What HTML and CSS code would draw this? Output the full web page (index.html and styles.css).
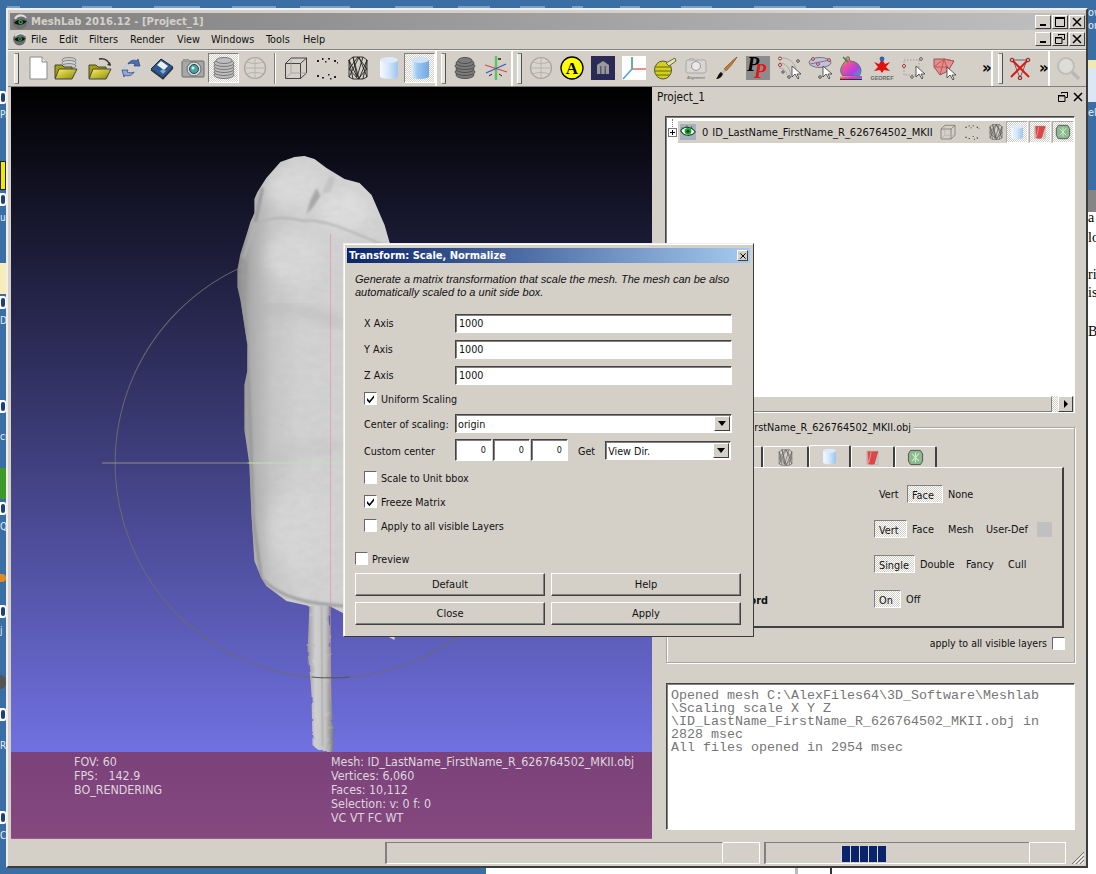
FILE: index.html
```html
<!DOCTYPE html>
<html lang="en">
<head>
<meta charset="utf-8">
<title>MeshLab 2016.12 - [Project_1]</title>
<link rel="stylesheet" href="styles.css">
</head>
<body>
<svg class="defs" width="0" height="0" aria-hidden="true">
  <defs>
    <linearGradient id="fold" x1="0" y1="0" x2="1" y2="1"><stop offset="0" stop-color="#fff36a"/><stop offset="1" stop-color="#8a8a00"/></linearGradient>
    <linearGradient id="cyl" x1="0" y1="0" x2="1" y2="0"><stop offset="0" stop-color="#f4f9ff"/><stop offset=".45" stop-color="#d8e8fa"/><stop offset="1" stop-color="#9cc4ee"/></linearGradient>
    <linearGradient id="cyl2" x1="0" y1="0" x2="1" y2="0"><stop offset="0" stop-color="#e8f2fc"/><stop offset=".35" stop-color="#9cc6f0"/><stop offset="1" stop-color="#6fa8e4"/></linearGradient>
    <linearGradient id="rainbow" x1="0" y1="0" x2="1" y2="1"><stop offset="0" stop-color="#f6d72c"/><stop offset=".35" stop-color="#f0509a"/><stop offset=".7" stop-color="#b040e0"/><stop offset="1" stop-color="#30b0e0"/></linearGradient>
    <symbol id="i-new" viewBox="0 0 24 24"><path d="M4 1h12l5 5v17H4z" fill="#fff" stroke="#8a8a8a"/><path d="M16 1v5h5" fill="#e8e8e8" stroke="#8a8a8a"/></symbol>
    <symbol id="i-open" viewBox="0 0 24 24"><g stroke="#777" stroke-width=".8"><ellipse cx="15" cy="4" rx="7" ry="2.500" fill="#c8c8c8"/><ellipse cx="15" cy="7" rx="7" ry="2.500" fill="#d4d4d4"/><ellipse cx="15" cy="10" rx="7" ry="2.500" fill="#c8c8c8"/></g><path d="M1 9h7l2 2h8v11H1z" fill="#a6a000" stroke="#444"/><path d="M1 23 5 13h18l-5 10z" fill="url(#fold)" stroke="#444"/></symbol>
    <symbol id="i-openp" viewBox="0 0 24 24"><path d="M11 3c5-1 9 1 11 6" fill="none" stroke="#333" stroke-width="1.300"/><path d="M23 10l-4-1 3-3z" fill="#333"/><path d="M1 9h7l2 2h8v11H1z" fill="#a6a000" stroke="#444"/><path d="M1 23 5 13h18l-5 10z" fill="url(#fold)" stroke="#444"/></symbol>
    <symbol id="i-reload" viewBox="0 0 24 24"><path d="M9 8c1-3 6-5 9-3l1-2 2 7-6 0 1-2c-2-1-5-1-7 0z" fill="#4a6fb5" stroke="#25407a" stroke-width=".7"/><path d="M15 16c-1 3-6 5-9 3l-1 2-2-7 6 0-1 2c2 1 5 1 7 0z" fill="#8faad6" stroke="#25407a" stroke-width=".7"/><path d="M5 12 8 8M19 12l-3 4" stroke="#b9cdea" stroke-width="2"/></symbol>
    <symbol id="i-floppy" viewBox="0 0 24 24"><path d="M11 3 23 11 13 22 1 13z" fill="#2a5a9a" stroke="#222"/><path d="M11 5l7 5-4 4-7-5z" fill="#eef2f8"/><path d="M10 15l3-2 3 2-3 3z" fill="#8ab"/><path d="M1 14 13 23l10-11" fill="none" stroke="#333" stroke-width="1.200"/></symbol>
    <symbol id="i-camera" viewBox="0 0 24 24"><rect x="1" y="5" width="22" height="16" rx="1" fill="#a8a8a8" stroke="#6a6a6a"/><rect x="2" y="3" width="6" height="3" fill="#999"/><circle cx="13" cy="13" r="7" fill="#dcdcdc" stroke="#666"/><circle cx="13" cy="13" r="4.500" fill="#4fa0a0" stroke="#244"/><circle cx="12" cy="12" r="1.500" fill="#bff"/></symbol>
    <symbol id="i-layers" viewBox="0 0 24 24"><g fill="#bdbdbd" stroke="#6e6e6e" stroke-width=".9"><ellipse cx="12" cy="19" rx="10" ry="3.500"/><ellipse cx="12" cy="16" rx="10" ry="3.500"/><ellipse cx="12" cy="13" rx="10" ry="3.500"/><ellipse cx="12" cy="10" rx="10" ry="3.500"/><ellipse cx="12" cy="7" rx="10" ry="3.500"/><ellipse cx="12" cy="4.500" rx="8" ry="3"/></g></symbol>
    <symbol id="i-layers2" viewBox="0 0 24 24"><g fill="#7c7c7c" stroke="#4a4a4a" stroke-width=".9"><ellipse cx="12" cy="19" rx="9" ry="3.500"/><ellipse cx="12" cy="16" rx="10" ry="3.500"/><ellipse cx="12" cy="13" rx="9" ry="3.500"/><ellipse cx="12" cy="10" rx="10" ry="3.500"/><ellipse cx="12" cy="7" rx="9" ry="3.500"/><ellipse cx="12" cy="4.500" rx="7" ry="3"/></g></symbol>
    <symbol id="i-globe" viewBox="0 0 24 24"><circle cx="12" cy="12" r="10.500" fill="#d8d4cc" stroke="#a4a4a0" stroke-width="1.200"/><path d="M1.500 12h21M12 1.500v21M4 6c5 2 11 2 16 0M4 18c5-2 11-2 16 0" fill="none" stroke="#b4b4b0"/></symbol>
    <symbol id="i-box" viewBox="0 0 24 24"><path d="M1.500 7.500h15v15h-15zM1.500 7.500 7 2h15.500v15L16.500 22.500M16.500 7.500 22.500 2" fill="none" stroke="#444" stroke-width="1"/><path d="M1.500 22.500 7 17h15.500M7 2v15" fill="none" stroke="#999" stroke-width=".7"/></symbol>
    <symbol id="i-points" viewBox="0 0 24 24"><g fill="#222"><rect x="2" y="4" width="2" height="2"/><rect x="7" y="2" width="1.500" height="2"/><rect x="13" y="2" width="2" height="1.500"/><rect x="19" y="4" width="2" height="2"/><rect x="10" y="5" width="1.500" height="1.500"/><rect x="2" y="19" width="2" height="2"/><rect x="7" y="21" width="2" height="1.500"/><rect x="13" y="18" width="1.500" height="1.500"/><rect x="19" y="20" width="2" height="2"/><rect x="15" y="22" width="1.500" height="1.500"/><rect x="22" y="6" width="1" height="1.500"/></g></symbol>
    <symbol id="i-wire" viewBox="0 0 24 24"><path d="M3 4 7 1h10l4 3v17l-4 2H7l-4-2zM3 4l8 17 6-20M7 1l4 20M21 4l-8 19L7 1M3 21 13 1l8 20M7 23 3 4m14 19 4-19M3 13l9-12 9 12-9 10z" fill="none" stroke="#222" stroke-width=".9"/></symbol>
    <symbol id="i-smooth" viewBox="0 0 24 24"><path d="M3 4v16c0 4 18 4 18 0V4z" fill="url(#cyl)"/><ellipse cx="12" cy="4" rx="9" ry="3" fill="#dceafa"/></symbol>
    <symbol id="i-flat" viewBox="0 0 24 24"><path d="M3 4v16c0 4 18 4 18 0V4z" fill="url(#cyl2)"/><ellipse cx="12" cy="4" rx="9" ry="3" fill="#cfe2f7"/></symbol>
    <symbol id="i-red" viewBox="0 0 24 24"><path d="M5 3h15v2l-5 16c-3 2-9 1-10-1z" fill="#d84848"/><path d="M4 4v16h3z" fill="#e9a0a0"/><path d="M20 5v15l-4 2z" fill="#c8c8c8"/><path d="M10 4 7 19" stroke="#f3b0b0"/><path d="M4 3h16v19H4z" fill="none" stroke="#999" stroke-width=".5"/></symbol>
    <symbol id="i-tex" viewBox="0 0 24 24"><path d="M5 2h14l3 5v10l-3 5H5l-3-5V7z" fill="#8fb88f" stroke="#555" stroke-width="1.400"/><path d="M7 7l5 5 5-6M7 17l5-5 5 5M12 5v14" stroke="#c9f0c9" stroke-width="1.500" fill="none"/></symbol>
    <symbol id="i-axis" viewBox="0 0 24 24"><path d="M12 0v24" stroke="#5cc45c" stroke-width="2.400"/><path d="M1 9l22 7" stroke="#d84a4a" stroke-width="1.300"/><path d="M2 17 22 8" stroke="#3a58c8" stroke-width="1.300"/><path d="M5 20l3-2M18 20l-3-2" stroke="#222"/><path d="M14 3h3" stroke="#222" stroke-width="1.500"/></symbol>
    <symbol id="i-dark" viewBox="0 0 24 24"><rect width="24" height="24" fill="#2a2a55"/><path d="M6 18V9l6-4 6 4v9z" fill="#9a9a9a"/><path d="M9 10h1.500v8H9zm4.500 0H15v8h-1.500z" fill="#55557a"/></symbol>
    <symbol id="i-xyz" viewBox="0 0 24 24"><rect width="24" height="24" fill="#fff"/><path d="M10 13V1" stroke="#2e9a6a" stroke-width="1.500"/><path d="M10 13h14" stroke="#e06a6a" stroke-width="1.500"/><path d="M10 13 1 23" stroke="#4aa0e0" stroke-width="1.500"/></symbol>
    <symbol id="i-tape" viewBox="0 0 24 24"><ellipse cx="10" cy="14" rx="8.500" ry="9" fill="#d2cf1c" stroke="#554" stroke-width="1"/><path d="M2 11h16M2 15h16M3 19h14" stroke="#6b6a10"/><path d="M13 7 22 2l1 3-7 5z" fill="#e8e49a" stroke="#665"/></symbol>
    <symbol id="i-camg" viewBox="0 0 24 24"><rect x="2" y="4" width="20" height="13" rx="2" fill="#d8d6d0" stroke="#a8a8a8"/><circle cx="12" cy="10" r="4.500" fill="#e8e8e8" stroke="#9a9a9a"/><rect x="5" y="2" width="5" height="2" fill="#b8b8b8"/></symbol>
    <symbol id="i-brush" viewBox="0 0 24 24"><path d="M22 1c-3 5-7 10-11 14l-2-2C13 9 18 4 22 1z" fill="#c87a30" stroke="#6b3e14" stroke-width=".6"/><path d="M9 13l2 2-3 3-2-2z" fill="#bbb"/><path d="M6 16l2 2c-1 3-4 5-7 5 2-2 2-5 5-7z" fill="#111"/></symbol>
    <symbol id="i-sel1" viewBox="0 0 24 24"><g fill="none" stroke="#a8a8a8"><path d="M5 2c8 0 13 5 14 12M2 7c7 0 10 4 12 12M2 12c4 0 7 2 8 7"/></g><g fill="#eee" stroke="#a03030"><circle cx="3" cy="2.500" r="1.500"/><circle cx="3" cy="9" r="1.500"/></g><g fill="#eee" stroke="#444"><circle cx="21" cy="5" r="1.300"/><circle cx="12" cy="21" r="1.300"/><circle cx="6" cy="16" r="1.200"/></g><path d="M15 10v11l3-3 3 5 1-1-2-4h4z" fill="#fff" stroke="#333" stroke-width=".8"/></symbol>
    <symbol id="i-sel2" viewBox="0 0 24 24"><ellipse cx="12" cy="6.500" rx="11" ry="5" fill="#c0c0e0" stroke="#777"/><path d="M2 8 22 4" stroke="#777"/><g fill="#eee" stroke="#a03030"><circle cx="5" cy="3" r="1.400"/><circle cx="10" cy="8" r="1.400"/><circle cx="21" cy="4" r="1.400"/></g><circle cx="12" cy="21" r="1.300" fill="#eee" stroke="#444"/><path d="M15 10v11l3-3 3 5 1-1-2-4h4z" fill="#fff" stroke="#333" stroke-width=".8"/></symbol>
    <symbol id="i-bunny" viewBox="0 0 24 24"><path d="M7 4c-1-2 1-4 3-3 1 1 0 3 1 4 5 0 10 3 11 9 0 3-1 5-2 6H4c-2-2-3-5-2-8 1-3 3-5 5-8z" fill="url(#rainbow)" stroke="#375" stroke-width=".8"/><path d="M4 1l5 5" stroke="#384" stroke-width="1.500"/><rect x="1" y="20" width="22" height="3" fill="url(#rainbow)"/><path d="M1 23.500h22" stroke="#333"/></symbol>
    <symbol id="i-sel3" viewBox="0 0 24 24"><path d="M3 4h15v15H3z" fill="none" stroke="#999" stroke-dasharray="1.500 1.500"/><g fill="#eee" stroke="#a03030"><circle cx="3" cy="10" r="1.500"/></g><g fill="#eee" stroke="#555"><circle cx="20" cy="3" r="1.400"/><circle cx="11" cy="21" r="1.300"/></g><path d="M15 10v11l3-3 3 5 1-1-2-4h4z" fill="#fff" stroke="#333" stroke-width=".8"/></symbol>
    <symbol id="i-sel4" viewBox="0 0 24 24"><path d="M2 3h10l10 2-6 10-8 4-6-8z" fill="#e88c8c" stroke="#8a5a5a"/><path d="M2 11 12 3l4 12M8 19l4-16M2 11h14M22 5 12 3" stroke="#b65a5a" fill="none"/><path d="M15 11v11l3-3 3 5 1-1-2-4h4z" fill="#fff" stroke="#333" stroke-width=".8"/></symbol>
    <symbol id="i-xred" viewBox="0 0 24 24"><path d="M5 4h14M5 4 12 22l7-18" stroke="#666" fill="none"/><path d="M3 3 21 21M21 3 3 21" stroke="#e01818" stroke-width="2"/><g fill="#e49a9a" stroke="#822"><circle cx="4" cy="4" r="1.800"/><circle cx="20" cy="4" r="1.800"/><circle cx="12" cy="22" r="1.800"/></g></symbol>
    <symbol id="i-search" viewBox="0 0 24 24"><circle cx="10" cy="10" r="8" fill="#dedcd6" stroke="#bcbcb8" stroke-width="2"/><path d="M16 16l7 7" stroke="#b8b8b4" stroke-width="3.400"/></symbol>
    <symbol id="i-eye" viewBox="0 0 24 24"><path d="M1 10c5-7 15-7 22 2-6 7-17 7-22-2z" fill="#fff" stroke="#0a4a10" stroke-width="1.600"/><circle cx="12" cy="11" r="5" fill="#17a030"/><circle cx="12" cy="11" r="2" fill="#032"/><path d="M3 5 6 8M10 2l1 4M18 3l-2 4" stroke="#0a4a10"/></symbol>
    <symbol id="i-logo" viewBox="0 0 24 24"><circle cx="12" cy="12" r="11" fill="#6d6d6d"/><path d="M22 5A11 11 0 0 0 3 7l3 1a9 8 0 0 1 15-1z" fill="#ddd"/><path d="M3 13c4-5 12-6 19-2-4 6-13 7-19 2z" fill="#111"/><circle cx="13" cy="12" r="3.500" fill="#1fa64a"/><circle cx="13" cy="12" r="1.500" fill="#021"/></symbol>
    <symbol id="i-min" viewBox="0 0 12 12"><rect x="3" y="8" width="6" height="2" fill="#000"/></symbol>
    <symbol id="i-max" viewBox="0 0 12 12"><path d="M1.500 1.500h9v9h-9z" fill="none" stroke="#000"/><path d="M1 2h10" stroke="#000" stroke-width="2"/></symbol>
    <symbol id="i-restore" viewBox="0 0 12 12"><path d="M4.500 2.500V1.500h6v5h-2M1.500 5h6.500v5.500H1.500z" fill="none" stroke="#000"/><path d="M1 4.500h7M4 1.500h7" stroke="#000"/></symbol>
    <symbol id="i-close" viewBox="0 0 12 12"><path d="M2 2l8 8M10 2l-8 8" stroke="#000" stroke-width="1.500"/></symbol>
    <symbol id="i-check" viewBox="0 0 11 11"><path d="M2 5l2.500 2.800L9 2.200v2.600L4.500 10.200 2 7.500z" fill="#000"/></symbol>
    <symbol id="i-grip" viewBox="0 0 14 14"><path d="M13 1 1 13M13 5 5 13M13 9l-4 4" stroke="#777"/><path d="M13 3 3 13M13 7l-6 6M13 11l-2 2" stroke="#fff"/></symbol>
  </defs>
</svg>

<div class="desktop">
  <div class="top-strip"></div>
  <div class="dicon dicon-1"></div><span class="dtxt dtxt-1">Pa</span>
  <div class="dblock dblock-yellow"></div>
  <div class="dicon dicon-2"></div><span class="dtxt dtxt-2">uc</span>
  <div class="dblock dblock-pale"></div>
  <div class="dicon dicon-3"></div><span class="dtxt dtxt-3">D</span>
  <div class="dicon dicon-4"></div><span class="dtxt dtxt-4">cr</span>
  <div class="dblock dblock-green"></div>
  <div class="dicon dicon-5"></div><span class="dtxt dtxt-5">Qt</span>
  <div class="dblock dblock-orange"></div>
  <div class="dicon dicon-6"></div><span class="dtxt dtxt-6">j</span>
  <div class="dblock dblock-dark"></div>
  <div class="dicon dicon-7"></div><span class="dtxt dtxt-7">R</span>
  <div class="dicon dicon-8"></div><span class="dtxt dtxt-8">Cr</span>
  <div class="side-blob"></div>
  <span class="rtxt rtxt-1">ow</span><span class="rtxt rtxt-2">or</span><span class="rtxt rtxt-3">elo</span>
  <div class="back-window">
    <div class="back-title"></div>
    <span class="btxt btxt-1">a</span><span class="btxt btxt-2">lo</span><span class="btxt btxt-3">ri</span><span class="btxt btxt-4">is</span><span class="btxt btxt-5">B</span>
  </div>
  <div class="bottom-white"><i class="bw-a"></i><i class="bw-b"></i></div>
</div>

<div class="window">
  <div class="titlebar">
    <svg class="ti-logo"><use href="#i-logo"/></svg>
    <span class="ti-text">MeshLab 2016.12 - [Project_1]</span>
    <div class="ctrls">
      <button class="ctrl"><svg><use href="#i-min"/></svg></button>
      <button class="ctrl"><svg><use href="#i-max"/></svg></button>
      <button class="ctrl ctrl-x"><svg><use href="#i-close"/></svg></button>
    </div>
  </div>
  <div class="menubar">
    <svg class="m-logo"><use href="#i-logo"/></svg>
    <div class="menus">
      <span>File</span><span>Edit</span><span>Filters</span><span>Render</span><span>View</span><span>Windows</span><span>Tools</span><span>Help</span>
    </div>
    <div class="ctrls">
      <button class="ctrl"><svg><use href="#i-min"/></svg></button>
      <button class="ctrl"><svg><use href="#i-restore"/></svg></button>
      <button class="ctrl ctrl-x"><svg><use href="#i-close"/></svg></button>
    </div>
  </div>
  <div class="toolbar">
    <div class="tg tg-1">
      <i class="handle"></i>
      <div class="tool"><svg><use href="#i-new"/></svg></div>
      <div class="tool"><svg class="shift-l"><use href="#i-open"/></svg></div>
      <div class="tool"><svg><use href="#i-openp"/></svg></div>
      <div class="tool"><svg><use href="#i-reload"/></svg></div>
      <div class="tool"><svg><use href="#i-floppy"/></svg></div>
      <div class="tool"><svg><use href="#i-camera"/></svg></div>
      <div class="tool on"><svg><use href="#i-layers"/></svg></div>
      <div class="tool"><svg><use href="#i-globe"/></svg></div>
      <i class="vsep"></i>
      <div class="tool"><svg><use href="#i-box"/></svg></div>
      <div class="tool"><svg><use href="#i-points"/></svg></div>
      <div class="tool"><svg><use href="#i-wire"/></svg></div>
      <div class="tool"><svg><use href="#i-smooth"/></svg></div>
      <div class="tool on"><svg><use href="#i-flat"/></svg></div>
    </div>
    <div class="tg tg-2">
      <i class="handle"></i>
      <div class="tool"><svg><use href="#i-layers2"/></svg></div>
      <div class="tool"><svg><use href="#i-axis"/></svg></div>
    </div>
    <div class="tg tg-3">
      <i class="handle"></i>
      <div class="tool"><svg><use href="#i-globe"/></svg></div>
      <div class="tool"><svg viewBox="0 0 24 24"><circle cx="12" cy="12" r="11" fill="#ffff00" stroke="#000" stroke-width="1.300"/><text x="12" y="18" class="svg-a">A</text></svg></div>
      <div class="tool"><svg><use href="#i-dark"/></svg></div>
      <div class="tool"><svg><use href="#i-xyz"/></svg></div>
      <div class="tool"><svg><use href="#i-tape"/></svg></div>
      <div class="tool"><svg viewBox="0 0 24 24"><use href="#i-camg" width="24" height="24"/><text x="12" y="23" class="svg-tiny">Alignment</text></svg></div>
      <div class="tool"><svg><use href="#i-brush"/></svg></div>
      <div class="tool"><svg viewBox="0 0 24 24"><rect width="24" height="24" fill="#8c8c8c"/><text x="1" y="15" class="svg-p1">P</text><text x="8" y="22" class="svg-p2">P</text></svg></div>
      <div class="tool"><svg><use href="#i-sel1"/></svg></div>
      <div class="tool"><svg><use href="#i-sel2"/></svg></div>
      <div class="tool"><svg><use href="#i-bunny"/></svg></div>
      <div class="tool"><svg viewBox="0 0 24 24"><path d="M4 6l5 2 3-5 3 5 5-2-4 5 4 4-6-1-2 3-2-3-6 1 4-4z" fill="#e01010"/><circle cx="12" cy="3" r="2.400" fill="#3060b0"/><text x="12" y="23.500" class="svg-geo">GEOREF</text></svg></div>
      <div class="tool"><svg><use href="#i-sel3"/></svg></div>
      <div class="tool"><svg><use href="#i-sel4"/></svg></div>
      <span class="more more-3">»</span>
    </div>
    <div class="tg tg-4">
      <i class="handle"></i>
      <div class="tool"><svg><use href="#i-xred"/></svg></div>
      <span class="more more-4">»</span>
    </div>
    <div class="tg tg-5">
      <div class="tool"><svg><use href="#i-search"/></svg></div>
    </div>
  </div>

  <div class="workspace">
    <div class="gl">
      <svg class="scene" viewBox="12 87 640 665" preserveAspectRatio="none">
        <defs>
          <linearGradient id="body" gradientUnits="userSpaceOnUse" x1="238" y1="0" x2="300" y2="0"><stop offset="0" stop-color="#8a8a8a"/><stop offset=".22" stop-color="#acacac"/><stop offset=".55" stop-color="#c6c6c6"/><stop offset="1" stop-color="#d2d2d2"/></linearGradient>
          <linearGradient id="stem" gradientUnits="userSpaceOnUse" x1="308" y1="0" x2="334" y2="0"><stop offset="0" stop-color="#9c9c9c"/><stop offset=".3" stop-color="#cfcfcf"/><stop offset=".7" stop-color="#c2c2c2"/><stop offset="1" stop-color="#7c7c7c"/></linearGradient>
          <filter id="soft" x="-30%" y="-30%" width="160%" height="160%"><feGaussianBlur stdDeviation="7"/></filter>
          <filter id="soft2" x="-30%" y="-30%" width="160%" height="160%"><feGaussianBlur stdDeviation="1"/></filter>
          <filter id="noise" x="0" y="0" width="100%" height="100%"><feTurbulence type="fractalNoise" baseFrequency=".09 .16" numOctaves="2" seed="4"/><feColorMatrix values="0 0 0 0 .45  0 0 0 0 .45  0 0 0 0 .45  1.600 0 0 0 -.55"/></filter>
          <filter id="rough" x="-5%" y="-5%" width="110%" height="110%"><feTurbulence type="fractalNoise" baseFrequency=".12" numOctaves="2" seed="7" result="n"/><feDisplacementMap in="SourceGraphic" in2="n" scale="3"/></filter>
          <clipPath id="bodyclip"><path d="M295 157 305 156 315 159 327 168 345 179 360 183 372 195 385 225 395 260V640L330 606H310L287 601 267 586 262 578 255 561 252 514 250 464 245 430 245 396 245 385 248 371 248 345 245 325 241 300 238 287 238 270 241 254 248 232 251 222 255 213 255 199 258 192 267 178 281 162z"/></clipPath>
        </defs>
        <circle cx="331" cy="463" r="215" fill="none" stroke="#6a6a72" stroke-width="1"/>
        <path d="M308 653 311 680 312 695 313 745 320 751H333L334 745 332 695 331 650 330 604H310L309 630z" fill="url(#stem)" filter="url(#rough)"/>
        <path d="M322 606l1 140" stroke="#b0b0b0" stroke-width="2" opacity=".7"/>
        <path d="M295 157 305 156 315 159 327 168 345 179 360 183 372 195 385 225 395 260V640L330 606H310L287 601 267 586 262 578 255 561 252 514 250 464 245 430 245 396 245 385 248 371 248 345 245 325 241 300 238 287 238 270 241 254 248 232 251 222 255 213 255 199 258 192 267 178 281 162z" fill="url(#body)"/>
        <g clip-path="url(#bodyclip)">
          <ellipse cx="295" cy="188" rx="28" ry="20" fill="#dadada" filter="url(#soft)"/>
          <ellipse cx="345" cy="210" rx="25" ry="20" fill="#dedede" filter="url(#soft)"/>
          <ellipse cx="295" cy="258" rx="28" ry="26" fill="#d8d8d8" filter="url(#soft)"/>
          <ellipse cx="300" cy="530" rx="30" ry="42" fill="#d6d6d6" filter="url(#soft)"/>
          <path d="M250 312C275 305 300 308 345 325" stroke="#b0b0b0" stroke-width="5" fill="none" filter="url(#soft)"/>
          <path d="M250 470C280 455 300 445 345 445" stroke="#bcbcbc" stroke-width="5" fill="none" filter="url(#soft)"/>
          <path d="M244 258 256 224C270 216 290 217 304 221 320 218 345 228 395 250" stroke="#b4b4b4" stroke-width="2" fill="none" filter="url(#soft2)"/>
          <path d="M317 188 311 200 307 214 313 208 321 196z" fill="#a8a8a8" filter="url(#soft2)"/>
          <path d="M322 194 330 176 336 177 331 192z" fill="#c4c4c4" filter="url(#soft2)"/>
          <path d="M263 188 256 222M246 262 244 300 250 400 254 520 262 578" stroke="#999" stroke-width="3" fill="none" filter="url(#soft2)"/>
          <path d="M262 578C280 598 310 604 345 606" stroke="#a0a0a0" stroke-width="3" fill="none" filter="url(#soft2)"/>
          <rect x="235" y="150" width="165" height="470" filter="url(#noise)" opacity=".16"/>
        </g>
        <path d="M103 463H248" stroke="#8e9288"/>
        <path d="M248 463H345" stroke="#b9e6b0"/>
        <path d="M331 234V700" stroke="#dc9090" opacity=".55"/>
        <path d="M312 677A215 215 0 0 0 350 677" fill="none" stroke="#55555a"/>
      </svg>
      <div class="hud">
        <div class="hud-col hud-left">
          <div>FOV: 60</div>
          <div>FPS: &nbsp; 142.9</div>
          <div>BO_RENDERING</div>
        </div>
        <div class="hud-col hud-right">
          <div>Mesh: ID_LastName_FirstName_R_626764502_MKII.obj</div>
          <div>Vertices: 6,060</div>
          <div>Faces: 10,112</div>
          <div>Selection: v: 0 f: 0</div>
          <div>VC VT FC WT</div>
        </div>
      </div>
    </div>

    <div class="dock">
      <div class="dock-title">
        <span>Project_1</span>
        <svg class="dock-btn"><use href="#i-restore"/></svg>
        <svg class="dock-btn"><use href="#i-close"/></svg>
      </div>
      <div class="tree sunken">
        <div class="tree-line">
          <i class="expander"></i>
          <div class="layer-row">
            <svg class="eye"><use href="#i-eye"/></svg>
            <span class="l-num">0</span>
            <span class="l-name">ID_LastName_FirstName_R_626764502_MKII</span>
            <svg class="l-ic"><use href="#i-box"/></svg>
            <svg class="l-ic"><use href="#i-points"/></svg>
            <svg class="l-ic l-last"><use href="#i-wire"/></svg>
            <div class="l-tog"><svg><use href="#i-smooth"/></svg></div>
            <div class="l-tog"><svg><use href="#i-red"/></svg></div>
            <div class="l-tog"><svg><use href="#i-tex"/></svg></div>
          </div>
        </div>
        <div class="hscroll">
          <div class="hs-thumb"></div>
          <div class="hs-track"></div>
          <div class="hs-btn"><i class="arr-r"></i></div>
        </div>
      </div>
      <div class="group">
        <span class="legend">ID_LastName_FirstName_R_626764502_MKII.obj</span>
        <div class="tabs">
          <div class="tab"></div>
          <div class="tab"></div>
          <div class="tab"><svg class="dim"><use href="#i-wire"/></svg></div>
          <div class="tab tab-a"><svg><use href="#i-smooth"/></svg></div>
          <div class="tab"><svg><use href="#i-red"/></svg></div>
          <div class="tab"><svg><use href="#i-tex"/></svg></div>
        </div>
        <div class="tab-panel">
          <div class="opt-row">
            <span class="opt-label">Shading</span>
            <span class="opt w33">Vert</span><span class="opt w36 on">Face</span><span class="opt">None</span>
          </div>
          <div class="opt-row">
            <span class="opt-label">Color</span>
            <span class="opt w33 on">Vert</span><span class="opt w36">Face</span><span class="opt w38">Mesh</span><span class="opt w56">User-Def</span><i class="swatch"></i>
          </div>
          <div class="opt-row">
            <span class="opt-label">Back-Face</span>
            <span class="opt w41 on">Single</span><span class="opt w46">Double</span><span class="opt w42">Fancy</span><span class="opt">Cull</span>
          </div>
          <div class="opt-row">
            <span class="opt-label opt-bold">Texture Coord</span>
            <span class="opt w27 on">On</span><span class="opt">Off</span>
          </div>
        </div>
        <div class="apply-all">
          <span>apply to all visible layers</span><i class="cb"></i>
        </div>
      </div>
      <div class="log sunken">Opened mesh C:\AlexFiles64\3D_Software\Meshlab
\Scaling scale X Y Z
\ID_LastName_FirstName_R_626764502_MKII.obj in
2828 msec
All files opened in 2954 msec</div>
    </div>
  </div>

  <div class="statusbar">
    <div class="st st-1"></div>
    <div class="st st-2"></div>
    <div class="st st-3"><div class="progress"><i></i><i></i><i></i><i></i><i></i></div></div>
    <div class="st st-4"></div>
    <svg class="grip"><use href="#i-grip"/></svg>
  </div>
</div>

<div class="dialog">
  <div class="dlg-title">
    <span>Transform: Scale, Normalize</span>
    <button class="dlg-x"><svg><use href="#i-close"/></svg></button>
  </div>
  <p class="dlg-desc">Generate a matrix transformation that scale the mesh. The mesh can be also automatically scaled to a unit side box.</p>
  <div class="form">
    <div class="f-row f-axis"><label class="f-label">X Axis</label><div class="input sunken">1000</div></div>
    <div class="f-row f-axis"><label class="f-label">Y Axis</label><div class="input sunken">1000</div></div>
    <div class="f-row f-axis"><label class="f-label">Z Axis</label><div class="input sunken">1000</div></div>
    <div class="f-check f-uniform"><i class="cb"><svg><use href="#i-check"/></svg></i><span>Uniform Scaling</span></div>
    <div class="f-row f-center"><label class="f-label">Center of scaling:</label>
      <div class="combo sunken combo-wide"><span>origin</span><b class="combo-btn"><i class="arr-d"></i></b></div>
    </div>
    <div class="f-row f-custom"><label class="f-label">Custom center</label>
      <div class="spin sunken">0</div><div class="spin sunken">0</div><div class="spin sunken">0</div>
      <span class="f-get">Get</span>
      <div class="combo sunken combo-get"><span>View Dir.</span><b class="combo-btn"><i class="arr-d"></i></b></div>
    </div>
    <div class="f-check f-scale"><i class="cb"></i><span>Scale to Unit bbox</span></div>
    <div class="f-check f-next"><i class="cb"><svg><use href="#i-check"/></svg></i><span>Freeze Matrix</span></div>
    <div class="f-check f-next"><i class="cb"></i><span>Apply to all visible Layers</span></div>
  </div>
  <div class="f-check f-preview"><i class="cb"></i><span>Preview</span></div>
  <div class="btn-grid">
    <button class="btn">Default</button>
    <button class="btn">Help</button>
    <button class="btn">Close</button>
    <button class="btn">Apply</button>
  </div>
</div>
</body>
</html>
```
FILE: styles.css
```css
* { box-sizing: border-box; }
html, body { margin: 0; padding: 0; }
body {
  width: 1096px; height: 874px; overflow: hidden; position: relative;
  background: #3a6ea5;
  font: 10.8px/13px "DejaVu Sans Condensed", "DejaVu Sans", Tahoma, sans-serif;
  font-stretch: condensed;
  color: #111;
}
button { font: inherit; color: inherit; padding: 0; margin: 0; }
svg { display: block; }
.defs { position: absolute; }
i { display: block; font-style: normal; }

/* desktop behind the windows: a free canvas */
.desktop { position: absolute; inset: 0; overflow: hidden; }
.top-strip {
  position: absolute; left: 0; top: 6px; width: 1096px; height: 2px;
  background: linear-gradient(90deg, transparent 7px, #c8d8ea 7px 20px, transparent 20px 82px, #c8d8ea 82px 112px, transparent 112px 154px, #c8d8ea 154px 200px, transparent 200px 232px, #c8d8ea 232px 276px, transparent 276px 300px, #c8d8ea 300px 350px, transparent 350px 395px, #c8d8ea 395px 433px, transparent 433px 458px, #c8d8ea 458px 490px, transparent 490px 520px, #c8d8ea 520px 545px, transparent 545px 572px, #c8d8ea 572px 583px, transparent 583px 620px, #c8d8ea 620px 640px, transparent 640px 681px, #c8d8ea 681px 712px, transparent 712px 754px, #c8d8ea 754px 806px, transparent 806px 833px, #c8d8ea 833px 880px, transparent 880px);
  opacity: .45;
}
.dicon { position: absolute; left: 0; width: 6px; height: 13px; background: #fff; border-radius: 0 2px 2px 0; }
.dicon::after { content: ""; position: absolute; left: 1px; top: 2px; width: 4px; height: 9px; background: #1f3f7a; border-radius: 2px; }
.dicon-1 { top: 91px; } .dicon-2 { top: 193px; } .dicon-3 { top: 296px; } .dicon-4 { top: 400px; }
.dicon-5 { top: 502px; } .dicon-6 { top: 605px; } .dicon-7 { top: 708px; } .dicon-8 { top: 811px; }
.dtxt { position: absolute; left: 0; width: 8px; overflow: hidden; color: #e8eef6; font-size: 10px; white-space: nowrap; }
.dtxt-1 { top: 108px; } .dtxt-2 { top: 211px; } .dtxt-3 { top: 314px; } .dtxt-4 { top: 430px; }
.dtxt-5 { top: 520px; } .dtxt-6 { top: 624px; } .dtxt-7 { top: 739px; } .dtxt-8 { top: 829px; }
.dblock { position: absolute; left: 0; width: 6px; }
.dblock-yellow { top: 161px; height: 29px; background: #f2e800; border: 1px solid #222; }
.dblock-pale { top: 263px; height: 31px; background: #f7edb8; }
.dblock-green { top: 468px; height: 31px; background: #3e9a28; }
.dblock-orange { top: 574px; height: 8px; background: #e08a20; border-radius: 0 4px 4px 0; }
.dblock-dark { top: 675px; height: 14px; background: #555; border-radius: 0 7px 7px 0; }
.side-blob { position: absolute; left: 1088px; top: 60px; width: 8px; height: 42px; background: linear-gradient(#f2e9b0 0 8px, #dbe7f4 8px); }
.rtxt { position: absolute; left: 1088px; color: #e8eef6; white-space: nowrap; width: 8px; overflow: hidden; }
.rtxt-1 { top: 6px; } .rtxt-2 { top: 19px; } .rtxt-3 { top: 106px; }
.back-window { position: absolute; left: 1088px; top: 190px; width: 8px; height: 684px; background: #fff; }
.back-title { height: 22px; background: #858585; }
.btxt { position: absolute; left: 0; font: 14px/16px "Liberation Serif", serif; color: #000; white-space: nowrap; }
.btxt-1 { top: 20px; } .btxt-2 { top: 40px; } .btxt-3 { top: 77px; } .btxt-4 { top: 95px; } .btxt-5 { top: 134px; }
.bottom-white { position: absolute; left: 486px; top: 868px; width: 610px; height: 6px; background: #fff; }
.bw-a { position: absolute; left: 309px; top: 0; width: 3px; height: 6px; background: #bbb; }
.bw-b { position: absolute; left: 344px; top: 0; width: 2px; height: 6px; background: #333; }

/* main window */
.window {
  position: absolute; left: 6px; top: 8px; width: 1082px; height: 860px;
  background: #d4d0c8;
  border: 2px solid; border-color: #efefef #3c3c3c #3c3c3c #efefef;
  padding-top: 3px;
  display: flex; flex-direction: column;
}
.titlebar {
  height: 17px; margin-left: 2px; flex: none;
  background: linear-gradient(90deg, #808080, #c0c0c0);
  display: flex; align-items: center; color: #d4d0c8; font-weight: bold; font-size: 11.2px;
}
.ti-logo { width: 16px; height: 16px; margin-left: 2px; }
.ti-text { margin-left: 3px; white-space: nowrap; }
.ctrls { margin-left: auto; margin-right: 1px; display: flex; gap: 1px; }
.ctrl {
  width: 16px; height: 14px; background: #d4d0c8; display: flex; align-items: center; justify-content: center;
  border: 1px solid; border-color: #fff #404040 #404040 #fff;
}
.ctrl svg { width: 12px; height: 12px; }
.menubar { height: 18px; flex: none; display: flex; align-items: center; }
.m-logo { width: 15px; height: 14px; margin-left: 4px; margin-right: 4px; }
.menus { display: grid; grid-template-columns: 28px 30px 41px 47px 34px 55px 37px auto; white-space: nowrap; }
.toolbar {
  height: 38px; flex: none; display: flex; align-items: center;
  border-top: 1px solid #808080; border-bottom: 1px solid #808080;
  box-shadow: inset 0 1px #fff;
  margin-top: 1px;
}
.tg { display: flex; align-items: center; height: 36px; flex: none; border-right: 2px solid; border-image: linear-gradient(90deg, #808080 50%, #fff 50%) 1; position: relative; }
.tg-1 { width: 429px; padding-left: 6px; }
.tg-2 { width: 76px; padding-left: 4px; }
.tg-3 { width: 480px; padding-left: 4px; }
.tg-4 { width: 57px; padding-left: 5px; }
.tg-5 { border-right: 0; padding-left: 2px; }
.handle { width: 5px; height: 31px; flex: none; border: 1px solid; border-color: #808080 #505050 #808080 #fff; background: #e6e4de; margin-right: 3px; }
.tg-4 .handle { margin-right: 1px; }
.tool { width: 31px; height: 30px; flex: none; display: flex; align-items: center; justify-content: center; }
.tool svg { width: 24px; height: 24px; }
.tool .shift-l { margin-left: -5px; }
.tool.on { background: repeating-conic-gradient(#fff 0 25%, #d4d0c8 0 50%) 0 0 / 2px 2px; border: 1px solid; border-color: #808080 #fff #fff #808080; }
.vsep { width: 2px; height: 31px; margin: 0 4px; flex: none; background: linear-gradient(90deg, #808080 50%, #fff 50%); }
.more { font: bold 15px/15px "DejaVu Sans", sans-serif; color: #000; }
.more-3 { margin-left: 23px; }
.more-4 { margin-left: 4px; }

.workspace { flex: none; display: flex; height: 752px; }
.gl {
  width: 641px; margin-left: 3px; flex: none; height: 752px; position: relative; overflow: hidden;
  background: linear-gradient(#000, #7070e0 88%);
}
.scene { position: absolute; left: 0; top: 0; width: 641px; height: 665px; }
.hud {
  position: absolute; left: 0; right: 0; bottom: 0; height: 87px;
  background: linear-gradient(#7a4279, #85487f);
  border-bottom: 1px solid #a05a90;
  color: #ded6de; font-size: 12.35px; line-height: 14px;
  display: flex; padding-top: 3px;
}
.hud-col { white-space: nowrap; }
.hud-left { margin-left: 63px; width: 257px; }

.dock { flex: 1; min-width: 0; padding: 0 11px 0 13px; display: flex; flex-direction: column; }
.dock-title { display: flex; align-items: center; height: 18px; margin: 1px -9px 0 -8px; font-size: 11.7px; flex: none; }
.dock-title span { margin-right: auto; }
.dock-btn { width: 12px; height: 12px; margin-left: 3px; }
.sunken {
  border: 1px solid; border-color: #444 #fff #fff #444;
  box-shadow: inset 1px 1px #808080;
  background: #fff;
}
.tree { height: 297px; flex: none; margin-top: 10px; display: flex; flex-direction: column; position: relative; padding: 4px 0 0 2px; }
.tree::before { content: ""; position: absolute; left: 6px; top: 2px; height: 8px; border-left: 1px dotted #777; }
.tree-line { display: flex; align-items: center; height: 22px; flex: none; }
.expander { width: 9px; height: 9px; border: 1px solid #777; margin-right: 1px; flex: none; background: linear-gradient(#000, #000) center/5px 1px no-repeat, linear-gradient(#000, #000) center/1px 5px no-repeat, #fff; }
.layer-row { flex: 1; height: 22px; background: #d4d0c8; display: flex; align-items: center; white-space: nowrap; overflow: hidden; font-size: 11.05px; }
.eye { width: 16px; height: 16px; margin-left: 2px; background: #a8b0c0; flex: none; }
.l-num { margin-left: 6px; }
.l-name { margin-left: 4px; width: 223px; flex: none; }
.l-ic { width: 16px; height: 16px; margin-right: 8px; opacity: .75; flex: none; }
.l-name + .l-ic { margin-left: 5px; }
.l-last { margin-right: 2px; }
.l-tog { width: 22px; height: 22px; flex: none; margin-right: 1px; display: flex; align-items: center; justify-content: center; background: repeating-conic-gradient(#fff 0 25%, #d4d0c8 0 50%) 0 0 / 2px 2px; border: 1px solid; border-color: #aaa #fff #fff #aaa; }
.l-tog svg { width: 16px; height: 18px; }
.hscroll { height: 16px; flex: none; margin: auto 0 0 -1px; display: flex; background: #d4d0c8; }
.hs-thumb { flex: 1; border-top: 1px solid #fff; border-bottom: 1px solid #808080; border-right: 1px solid #808080; }
.hs-track { width: 6px; background: repeating-conic-gradient(#fff 0 25%, #d4d0c8 0 50%) 0 0 / 2px 2px; }
.hs-btn { width: 15px; display: flex; align-items: center; justify-content: center; border: 1px solid; border-color: #fff #404040 #404040 #fff; margin-right: 1px; }
.arr-r { border-left: 4px solid #000; border-top: 4px solid transparent; border-bottom: 4px solid transparent; }
.group {
  height: 236px; margin: 14px 0 0 1px; flex: none; position: relative;
  border: 1px solid #a8a8a0; box-shadow: 1px 1px #fff, inset 1px 1px #fff;
  padding: 17px 10px 0 11px;
}
.legend { position: absolute; right: 160px; top: -7px; background: #d4d0c8; padding: 0 3px; white-space: nowrap; }
.tabs { display: flex; height: 22px; align-items: flex-end; margin-left: 2px; }
.tab { width: 41px; height: 21px; border: 1px solid #fff; border-bottom: 0; border-right: 2px solid #404040; border-radius: 2px 2px 0 0; display: flex; align-items: center; justify-content: center; flex: none; }
.tab:nth-child(2) { width: 42px; }
.tab:nth-child(3) { width: 46px; }
.tab:nth-child(5) { width: 44px; }
.tab:nth-child(6) { width: 42px; }
.tab svg { width: 17px; height: 17px; }
.tab .dim { opacity: .65; }
.tab-a { width: 42px; height: 22px; background: #d4d0c8; }
.tab-panel { height: 161px; flex: none; border: 1px solid; border-color: #fff #404040 #404040 #fff; border-width: 1px 2px 2px 1px; padding-top: 17px; }
.opt-row { height: 18px; margin-bottom: 17px; display: flex; align-items: center; white-space: nowrap; }
.opt-label { width: 195px; flex: none; text-align: right; padding-right: 130px; }
.opt-bold { font-weight: bold; padding-right: 106px; padding-top: 2px; }
.opt { padding: 2px 5px 0; height: 18px; line-height: 16px; flex: none; }
.opt.on { background: repeating-conic-gradient(#fff 0 25%, #d4d0c8 0 50%) 0 0 / 2px 2px; border: 1px solid; border-color: #808080 #fff #fff #808080; padding: 2px 4px 0; line-height: 15px; }
.w27 { width: 27px; } .w33 { width: 33px; } .w36 { width: 36px; } .w38 { width: 38px; } .w41 { width: 41px; } .w42 { width: 42px; } .w46 { width: 46px; } .w56 { width: 56px; }
.swatch { width: 15px; height: 15px; background: #c0c0c0; flex: none; }
.apply-all { display: flex; align-items: center; justify-content: flex-end; margin: 9px -1px 0 0; height: 13px; gap: 5px; font-size: 10.5px; }
.log {
  height: 147px; margin: 20px 0 0 1px; flex: none; padding: 5px 4px; overflow: hidden;
  font: 13.33px/13px "Liberation Mono", monospace; color: #767676; white-space: pre;
}

.statusbar { height: 27px; flex: none; position: relative; display: flex; align-items: center; padding-left: 377px; }
.st { height: 22px; flex: none; border: 1px solid; border-color: #808080 #fff #fff #808080; }
.st-1 { width: 338px; border-left-width: 2px; }
.st-2 { width: 37px; margin-right: 4px; border-color: #fff #fff #fff #fff; border-left: 0; }
.st-3 { width: 265px; border-left-width: 2px; border-right: 0; position: relative; }
.st-4 { width: 37px; border-color: #fff #fff #fff #fff; border-left: 1px solid #fff; }
.progress { position: absolute; left: 75px; top: 3px; width: 45px; height: 16px; display: flex; gap: 1px; padding: 0 1px; background: #dcdae4; }
.progress i { width: 8px; height: 100%; background: #0a246a; flex: none; }
.grip { position: absolute; right: 1px; bottom: 1px; width: 14px; height: 14px; }

/* dialog floats over the main window */
.dialog {
  position: absolute; left: 343px; top: 243px; width: 411px; height: 394px;
  background: #d4d0c8; padding: 4px 3px 0 3px;
  border: 1px solid; border-color: #eee #3c3c3c #3c3c3c #eee;
  box-shadow: inset 1px 1px #fff;
}
.dlg-title {
  height: 15px; background: linear-gradient(90deg, #0a246a, #a6caf0);
  color: #fff; font-weight: bold; font-size: 11px; line-height: 15px;
  display: flex; align-items: center; justify-content: space-between; padding-left: 2px;
}
.dlg-x { width: 11px; height: 11px; background: #d4d0c8; border: 1px solid; border-color: #fff #404040 #404040 #fff; margin-right: 2px; display: flex; align-items: center; justify-content: center; }
.dlg-x svg { width: 8px; height: 8px; }
.dlg-desc { margin: 10px 0 0 8px; width: 385px; font: italic 11px/13px "Liberation Sans", sans-serif; }
.form { margin: 15px 0 0 17px; font-size: 10.7px; }
.f-row { display: flex; align-items: center; }
.f-axis { height: 19px; margin-bottom: 7px; }
.f-label { width: 91px; flex: none; white-space: nowrap; }
.f-center .f-label, .f-custom .f-label, .f-get, .combo span { padding-top: 2px; }
.input { flex: none; width: 277px; height: 19px; line-height: 17px; padding-left: 3px; }
.cb { width: 13px; height: 13px; flex: none; background: #fff; border: 1px solid; border-color: #666 #fff #fff #666; display: flex; align-items: center; justify-content: center; }
.cb svg { width: 11px; height: 11px; }
.f-check { display: flex; align-items: center; gap: 4px; height: 13px; font-size: 10.7px; white-space: nowrap; }
.f-check span { padding-top: 2px; }
.f-uniform { margin: 4px 0 9px; }
.f-center { height: 19px; margin-bottom: 6px; }
.combo { display: flex; align-items: center; justify-content: space-between; height: 19px; padding: 0 1px 0 2px; flex: none; }
.combo-wide { width: 277px; }
.combo-get { width: 126px; }
.combo-btn { width: 16px; height: 15px; background: #d4d0c8; border: 1px solid; border-color: #fff #404040 #404040 #fff; display: flex; align-items: center; justify-content: center; }
.arr-d { border-top: 5px solid #000; border-left: 4px solid transparent; border-right: 4px solid transparent; }
.f-custom { height: 22px; margin-bottom: 10px; }
.spin { width: 37px; height: 22px; margin-right: 1px; text-align: right; font-size: 9px; line-height: 20px; padding-right: 5px; flex: none; }
.f-get { margin: 0 10px 0 9px; }
.f-next { margin-top: 11px; }
.f-preview { margin: 20px 0 0 8px; }
.btn-grid { display: grid; grid-template-columns: 190px 190px; column-gap: 6px; row-gap: 6px; margin: 8px 0 0 8px; }
.btn { height: 23px; background: #d4d0c8; border: 1px solid; border-color: #fff #404040 #404040 #fff; box-shadow: inset -1px -1px #808080; font-size: 11px; }

/* svg text */
.svg-a { font: bold 17px "Liberation Serif", serif; text-anchor: middle; fill: #000; }
.svg-tiny { font: 4px "Liberation Sans", sans-serif; text-anchor: middle; fill: #666; }
.svg-p1 { font: italic bold 20px "Liberation Serif", serif; fill: #000; }
.svg-p2 { font: italic bold 20px "Liberation Serif", serif; fill: #e01818; }
.svg-geo { font: bold 5.500px "Liberation Sans", sans-serif; text-anchor: middle; fill: #666; }
```
